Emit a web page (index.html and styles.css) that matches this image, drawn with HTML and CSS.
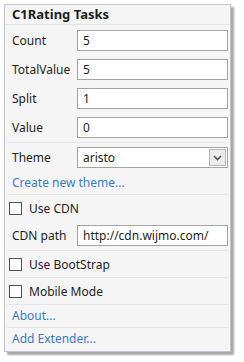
FILE: index.html
```html
<!DOCTYPE html>
<html lang="en">
<head>
    <meta charset="UTF-8">
    <meta name="viewport" content="width=device-width, initial-scale=1.0">
    <title>C1Rating Tasks</title>
    <link rel="stylesheet" href="styles.css">
</head>
<body>
    <div class="tasks-panel">
        <div class="panel-header">C1Rating Tasks</div>

        <div class="section fields">
            <div class="field-row">
                <label class="field-label">Count</label>
                <input class="field-input" type="text" value="5">
            </div>
            <div class="field-row">
                <label class="field-label">TotalValue</label>
                <input class="field-input" type="text" value="5">
            </div>
            <div class="field-row">
                <label class="field-label">Split</label>
                <input class="field-input" type="text" value="1">
            </div>
            <div class="field-row">
                <label class="field-label">Value</label>
                <input class="field-input" type="text" value="0">
            </div>
        </div>

        <div class="section">
            <div class="field-row">
                <label class="field-label">Theme</label>
                <div class="field-select">
                    <span class="select-value">aristo</span>
                    <span class="select-btn">
                        <svg width="9" height="6" viewBox="0 0 9 6">
                            <path d="M1 1 L4.5 4.5 L8 1" fill="none" stroke="#555" stroke-width="1.6"/>
                        </svg>
                    </span>
                </div>
            </div>
            <a class="link-row" href="#">Create new theme...</a>
        </div>

        <div class="section">
            <label class="check-row">
                <span class="check-box"></span>
                <span>Use CDN</span>
            </label>
            <div class="field-row">
                <label class="field-label">CDN path</label>
                <input class="field-input" type="text" value="http://cdn.wijmo.com/">
            </div>
        </div>

        <div class="section">
            <label class="check-row">
                <span class="check-box"></span>
                <span>Use BootStrap</span>
            </label>
        </div>

        <div class="section">
            <label class="check-row">
                <span class="check-box"></span>
                <span>Mobile Mode</span>
            </label>
        </div>

        <div class="section">
            <a class="link-row" href="#">About...</a>
        </div>

        <div class="section last">
            <a class="link-row extender" href="#">Add Extender...</a>
        </div>
    </div>
</body>
</html>
```

FILE: styles.css
```css
* {
    margin: 0;
    padding: 0;
    box-sizing: border-box;
}

body {
    font-family: 'Noto Sans', 'Open Sans', sans-serif;
    font-size: 12px;
    color: #1e1e1e;
    background: #ffffff;
    padding: 4px;
}

.tasks-panel {
    width: 227px;
    background: #f5f5f5;
    border: 1px solid #c4c3d6;
    box-shadow: 3px 3px 2px rgba(0, 0, 0, 0.35);
    display: flex;
    flex-direction: column;
}

.panel-header {
    height: 20px;
    line-height: 18px;
    padding-left: 7px;
    font-size: 13px;
    font-weight: bold;
    border-bottom: 1px solid #e2e2e2;
}

.section {
    display: flex;
    flex-direction: column;
    margin: 0 2px;
    border-bottom: 1px solid #e6e6e6;
}

.section.fields {
    padding-top: 1px;
}

.section.last {
    border-bottom: none;
}

.field-row {
    height: 29px;
    display: flex;
    align-items: center;
    padding-left: 5px;
}

.field-label {
    width: 65px;
}

.field-input {
    width: 151px;
    height: 21px;
    border: 1px solid #a3a3a3;
    background: white;
    font-family: inherit;
    font-size: 12px;
    color: #1e1e1e;
    padding: 0 5px;
    outline: none;
}

.field-select {
    width: 151px;
    height: 21px;
    border: 1px solid #a3a3a3;
    background: white;
    display: flex;
    align-items: center;
    justify-content: space-between;
    padding: 0 1px 0 5px;
}

.select-btn {
    width: 17px;
    height: 17px;
    background: #ececec;
    border: 1px solid #b5b5b5;
    display: flex;
    align-items: center;
    justify-content: center;
}

.link-row {
    height: 22px;
    line-height: 22px;
    padding-left: 5px;
    color: #3a7bc8;
    text-decoration: none;
}

.link-row.extender {
    height: 23px;
}

.check-row {
    height: 26px;
    display: flex;
    align-items: center;
    gap: 7px;
    padding-left: 2px;
}

.check-box {
    width: 13px;
    height: 13px;
    border: 1px solid #505050;
    background: white;
}
```
